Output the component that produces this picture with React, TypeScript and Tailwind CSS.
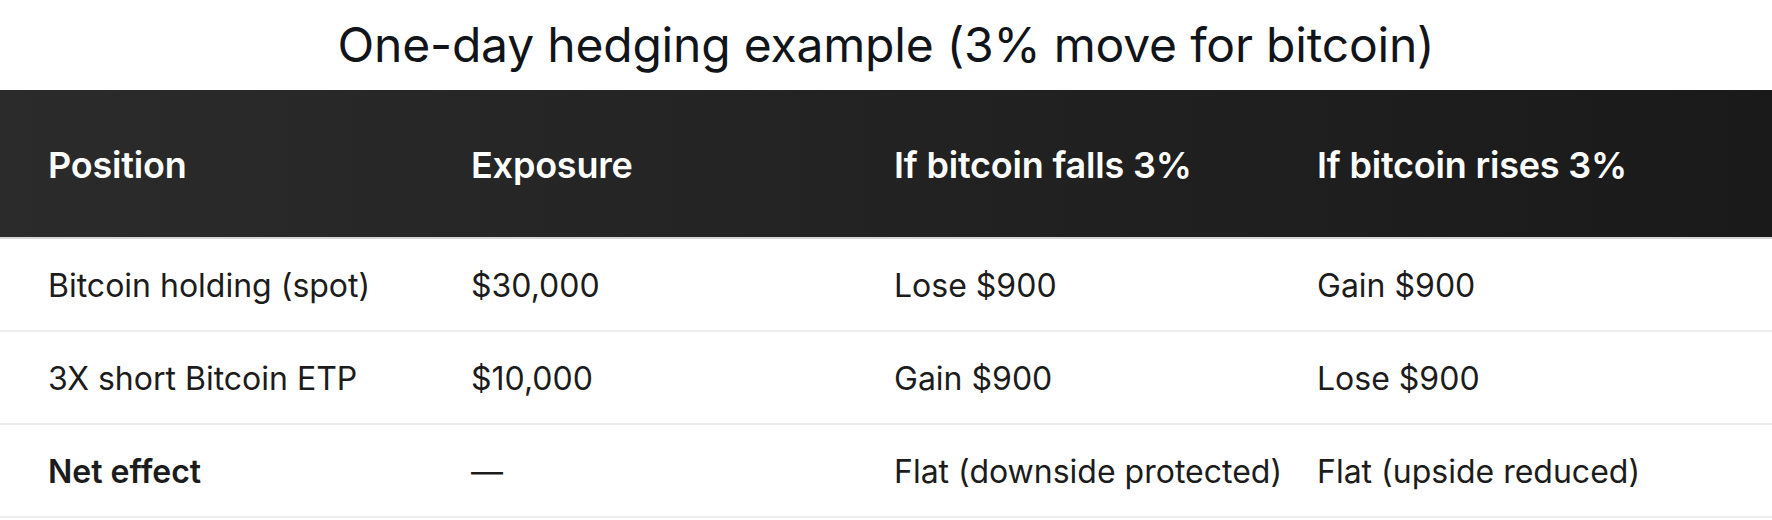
import React from 'react';

const rows = [
  { position: 'Bitcoin holding (spot)', exposure: '$30,000', falls: 'Lose $900', rises: 'Gain $900' },
  { position: '3X short Bitcoin ETP', exposure: '$10,000', falls: 'Gain $900', rises: 'Lose $900' },
  { position: 'Net effect', exposure: '—', falls: 'Flat (downside protected)', rises: 'Flat (upside reduced)', bold: true },
];

const headers = ['Position', 'Exposure', 'If bitcoin falls 3%', 'If bitcoin rises 3%'];

export default function App() {
  return (
    <div className="w-[1772px] h-[520px] bg-white font-['Inter','Liberation_Sans',sans-serif] overflow-hidden">
      <div className="h-[90px] flex items-center justify-center">
        <h1 className="text-[48px] font-normal text-[#11151a] tracking-[-0.2px]">
          One-day hedging example (3% move for bitcoin)
        </h1>
      </div>

      <div className="h-[149px] bg-gradient-to-r from-[#2b2b2b] to-[#1a1a1a] border-b-2 border-[#d6d6d6] grid grid-cols-[423px_423px_423px_423px] items-center pl-[48px] pt-[3px]">
        {headers.map((h) => (
          <div key={h} className="text-[36px] font-semibold text-white tracking-[-0.2px]">
            {h}
          </div>
        ))}
      </div>

      {rows.map((r) => (
        <div
          key={r.position}
          className="h-[93px] border-b-2 border-[#ececec] grid grid-cols-[423px_423px_423px_423px] items-center pl-[48px] pt-[3px] text-[32px] text-[#1c1c1c]"
        >
          <div className={r.bold ? 'font-semibold' : ''}>{r.position}</div>
          <div>{r.exposure}</div>
          <div>{r.falls}</div>
          <div>{r.rises}</div>
        </div>
      ))}
    </div>
  );
}
